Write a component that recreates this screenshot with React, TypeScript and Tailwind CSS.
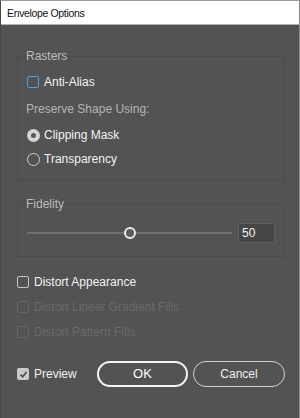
const font = { fontFamily: '"Liberation Sans", Arial, sans-serif' };

const Checkbox = ({
  tone = "normal",
  checked = false,
}: {
  tone?: "normal" | "focus" | "disabled";
  checked?: boolean;
}) => {
  if (checked) {
    return (
      <span className="flex h-[12px] w-[12px] shrink-0 items-center justify-center rounded-[2px] bg-[#c9c9c9]">
        <svg width="9" height="9" viewBox="0 0 9 9">
          <path d="M1.5 4.6 L3.6 6.8 L7.6 2" fill="none" stroke="#4a4a4a" strokeWidth="1.6" />
        </svg>
      </span>
    );
  }
  const border =
    tone === "focus"
      ? "border-[#4d9ee6]"
      : tone === "disabled"
      ? "border-[#646464]"
      : "border-[#c4c4c4]";
  return <span className={`h-[12px] w-[12px] shrink-0 rounded-[2px] border ${border}`} />;
};

const Radio = ({ selected = false }: { selected?: boolean }) =>
  selected ? (
    <span className="flex h-[13px] w-[13px] shrink-0 items-center justify-center rounded-full bg-[#d6d6d6]">
      <span className="h-[5px] w-[5px] rounded-full bg-[#5a5a5a]" />
    </span>
  ) : (
    <span className="h-[13px] w-[13px] shrink-0 rounded-full border border-[#cfcfcf]" />
  );

export default function App() {
  return (
    <div
      style={font}
      className="flex h-[418px] w-[300px] flex-col overflow-hidden border-t border-r border-l border-t-[#9c9c9c] border-r-[#8a8a8a] border-l-[#474747] bg-[#535353] text-[12px] leading-[16px] text-[#f2f2f2]"
    >
      <div className="flex h-[24px] shrink-0 items-center border-b border-[#b4b4b4] bg-white pl-[6px] text-[10.5px] tracking-[-0.35px] text-[#111]">
        Envelope Options
      </div>

      <div className="flex flex-col pl-[16px] pr-[14px]">
        <div className="mt-[31px] flex flex-col border border-[#4b4b4b] pb-[13px] pl-[8px]">
          <div className="-mt-[9px] text-[#bcbcbc]">Rasters</div>
          <div className="mt-[10px] ml-[1px] flex items-center gap-[5px]">
            <Checkbox tone="focus" />
            <span>Anti-Alias</span>
          </div>
          <div className="mt-[11px] text-[#b3b3b3]">Preserve Shape Using:</div>
          <div className="mt-[10px] ml-[1px] flex items-center gap-[4px]">
            <Radio selected />
            <span>Clipping Mask</span>
          </div>
          <div className="mt-[8px] ml-[1px] flex items-center gap-[4px]">
            <Radio />
            <span>Transparency</span>
          </div>
        </div>

        <div className="mt-[23px] flex flex-col border border-[#4b4b4b] pb-[13px] pl-[8px] pr-[9px]">
          <div className="-mt-[9px] text-[#bcbcbc]">Fidelity</div>
          <div className="mt-[11px] flex h-[20px] items-center">
            <div className="ml-[1px] flex w-[205px] items-center">
              <span className="h-[2px] flex-1 bg-[#6f6f6f]" />
              <span className="h-[12px] w-[12px] rounded-full border-2 border-[#ececec] bg-[#5c5c5c]" />
              <span className="h-[2px] flex-1 bg-[#6f6f6f]" />
            </div>
            <div className="ml-auto flex h-[20px] w-[37px] items-center border border-[#5e5e5e] bg-[#464646] pl-[3px]">
              50
            </div>
          </div>
        </div>

        <div className="mt-[17px] flex items-center gap-[5px]">
          <Checkbox />
          <span>Distort Appearance</span>
        </div>
        <div className="mt-[9px] flex items-center gap-[5px] text-[#6a6a6a]">
          <Checkbox tone="disabled" />
          <span>Distort Linear Gradient Fills</span>
        </div>
        <div className="mt-[9px] flex items-center gap-[5px] text-[#6a6a6a]">
          <Checkbox tone="disabled" />
          <span>Distort Pattern Fills</span>
        </div>

        <div className="mt-[21px] flex h-[26px] items-center">
          <div className="flex items-center gap-[5px]">
            <Checkbox checked />
            <span>Preview</span>
          </div>
          <div className="ml-auto flex gap-[5px]">
            <button className="flex h-[26px] w-[91px] items-center justify-center rounded-full border-2 border-[#f4f4f4] text-[13px] text-white">
              OK
            </button>
            <button className="flex h-[26px] w-[92px] items-center justify-center rounded-full border-[1.5px] border-[#d2d2d2] text-[12px] text-[#f0f0f0]">
              Cancel
            </button>
          </div>
        </div>
      </div>
    </div>
  );
}
